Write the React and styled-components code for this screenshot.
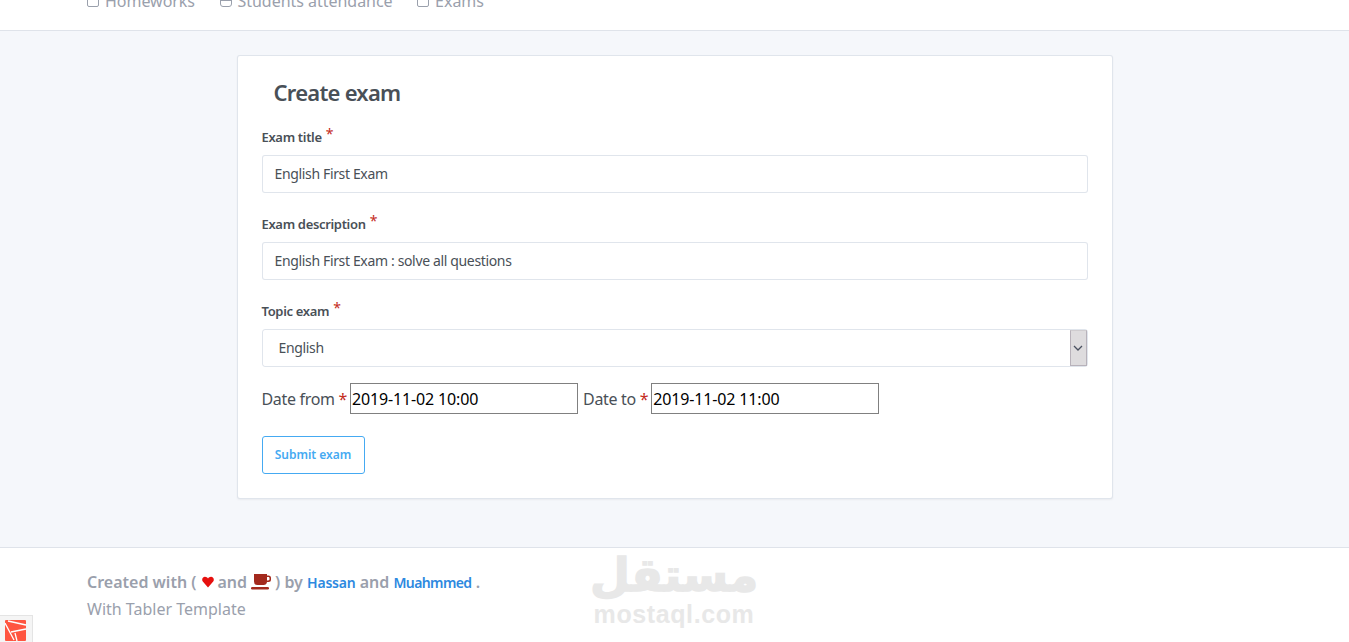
import React from "react";
import styled, { createGlobalStyle } from "styled-components";

const Global = createGlobalStyle`
  html, body { margin: 0; padding: 0; height: 642px; overflow: hidden; background: #f5f7fb; }
  body { font-family: "Noto Sans", "Liberation Sans", sans-serif; color: #495057; font-size: 15px; }
  * { box-sizing: border-box; }
`;
const Page = styled.div`display:flex;flex-direction:column;height:642px;position:relative;overflow:hidden;`;
const Header = styled.header`height:31px;background:#fff;border-bottom:1px solid #dfe3ea;padding-left:87px;display:flex;align-items:flex-end;gap:24.500px;overflow:hidden;flex:none;`;
const NavItem = styled.div`display:flex;align-items:center;gap:6px;height:20px;margin-bottom:19px;font-size:16px;letter-spacing:-.03px;color:#9aa0ac;white-space:nowrap;svg{flex:none;}`;
const Main = styled.main`flex:none;height:516px;padding-top:24px;display:flex;justify-content:center;`;
const Card = styled.section`width:876px;height:444px;background:#fff;border:1px solid rgba(0,40,100,.12);border-radius:3px;box-shadow:0 1px 2px rgba(0,0,0,.05);padding:0 24px;`;
const Title = styled.h1`margin:0;padding:21px 0 0 12px;height:69px;font-size:22px;line-height:30px;font-weight:600;letter-spacing:-.75px;color:#495057;`;
const Field = styled.div`margin-bottom:24px;height:63px;`;
const Label = styled.label`display:block;height:30px;font-size:13px;line-height:23px;font-weight:600;letter-spacing:-.33px;color:#495057;`;
const Star = styled.span`color:#c42c1c;`;
const LabelStar = styled(Star)`font-size:14px;font-weight:400;position:relative;top:-3px;margin-left:1px;`;
const TextInput = styled.input`display:block;width:100%;height:38px;border:1px solid rgba(0,40,100,.12);border-radius:3px;padding:0 12px 2px;font:14px "Noto Sans",sans-serif;letter-spacing:-.35px;color:#495057;outline:none;background:#fff;`;
const SelectBox = styled.div`display:flex;align-items:center;height:38px;border:1px solid rgba(0,40,100,.12);border-radius:3px;padding:0 0 0 16px;font-size:14px;letter-spacing:-.35px;color:#495057;justify-content:space-between;`;
const SelectText = styled.span`margin-top:-2px;`;
const Arrow = styled.div`width:17px;height:36px;background:#dedcde;border:1px solid #b8b2ba;border-top-color:#cfcccf;display:flex;align-items:center;justify-content:center;`;
const DateRow = styled.div`display:flex;align-items:center;height:31px;margin-top:-3px;font-size:16px;letter-spacing:-.32px;color:#495057;white-space:nowrap;`;
const DateLabel = styled.span`margin-right:${p=>p.$gap}px;`;
const DateInput = styled.input`width:228px;height:31px;border:1px solid #808080;padding:0 1px;margin-right:5px;font:16px "Noto Sans",sans-serif;letter-spacing:-.15px;color:#000;outline:none;background:#fff;`;
const Submit = styled.button`display:block;margin-top:22px;width:103px;height:38px;background:#fff;border:1px solid #45aaf2;border-radius:3px;color:#45aaf2;font:600 12px "Noto Sans",sans-serif;padding:0 0 1px;`;
const Footer = styled.footer`flex:1;background:#fff;border-top:1px solid #dfe3ea;padding:18px 0 0 87px;color:#9aa0ac;font-size:16px;position:relative;`;
const Credit = styled.div`display:flex;align-items:center;height:32px;font-weight:600;white-space:pre;`;
const IconSlot = styled.span`display:flex;margin:0 ${p=>p.$r}px 0 ${p=>p.$l}px;`;
const Author = styled.a`color:#2d89e0;font-size:14px;letter-spacing:${p=>p.$ls}px;`;
const Sub = styled.div`height:24px;line-height:22px;`;
const Mark = styled.div`position:absolute;left:592px;top:1px;width:164px;display:flex;flex-direction:column;align-items:center;color:#e8e8e8;`;
const MarkAr = styled.div`font:bold 46px/52px "DejaVu Sans",sans-serif;-webkit-text-stroke:1.500px #e8e8e8;`;
const MarkEn = styled.div`font:bold 25px/26px "Liberation Sans",sans-serif;letter-spacing:.6px;`;
const Debug = styled.div`position:absolute;left:0;bottom:0;width:33px;height:27px;background:#f5f5f5;border:1px solid #e4e4e4;border-left:0;border-bottom:0;padding:4px 0 0 5px;`;

const Square=()=> <svg width="12" height="12" viewBox="0 0 12 12" fill="none" stroke="#9aa0ac"><rect x=".5" y=".5" width="11" height="11" rx="1.5"/></svg>;
const Db=()=> <svg width="12" height="12" viewBox="0 0 12 12" fill="none" stroke="#9aa0ac"><rect x=".5" y=".5" width="11" height="11" rx="2.5"/><path d="M.5 5.500h11"/></svg>;
const Heart=()=> <svg width="12" height="12" viewBox="0 0 12 12"><path fill="#e6100e" d="M6 11.500.8 5.600C-.6 3.600.5.800 3 .8c1.300 0 2.400.7 3 1.800C6.600 1.500 7.700.8 9 .8c2.500 0 3.600 2.800 2.200 4.800Z"/></svg>;
const Mug=()=> <svg width="20" height="16" viewBox="0 0 20 16"><path fill="#a3291d" d="M3 0h13v1.500h1.500A2.500 2.500 0 0 1 20 4v1.500A2.500 2.500 0 0 1 17.500 8H16a3.500 3.500 0 0 1-3.500 3h-6A3.500 3.500 0 0 1 3 7.500ZM16 3v3.500h1.200c.7 0 1.300-.5 1.300-1.200V4.200c0-.7-.6-1.200-1.300-1.200Z"/><rect x="0" y="13" width="18" height="2.500" rx="1.200" fill="#a3291d"/></svg>;
const Laravel=()=> <svg width="22" height="22" viewBox="0 0 22 22"><rect width="21" height="21" rx="1" fill="#ff5540"/><path d="M0 3 9 20M3 1 21 5M6 12 21 9M12 21l-2-8" fill="none" stroke="#fff" strokeWidth="1.300"/></svg>;
const Chevron=()=> <svg width="10" height="6" viewBox="0 0 10 6" fill="none" stroke="#4a5160" strokeWidth="1.300"><path d="m1 1 4 4 4-4"/></svg>;

export default function App(){
  return <Page>
    <Global/>
    <Header>
      <NavItem><Square/>Homeworks</NavItem>
      <NavItem><Db/>Students attendance</NavItem>
      <NavItem><Square/>Exams</NavItem>
    </Header>
    <Main><Card>
      <Title>Create exam</Title>
      <Field><Label>Exam title <LabelStar>*</LabelStar></Label><TextInput readOnly value="English First Exam"/></Field>
      <Field><Label>Exam description <LabelStar>*</LabelStar></Label><TextInput readOnly value="English First Exam : solve all questions"/></Field>
      <Field><Label>Topic exam <LabelStar>*</LabelStar></Label><SelectBox><SelectText>English</SelectText><Arrow><Chevron/></Arrow></SelectBox></Field>
      <DateRow>
        <DateLabel $gap={3}>Date from <Star>*</Star></DateLabel><DateInput readOnly value="2019-11-02 10:00"/>
        <DateLabel $gap={3}>Date to <Star>*</Star></DateLabel><DateInput readOnly value="2019-11-02 11:00"/>
      </DateRow>
      <Submit>Submit exam</Submit>
    </Card></Main>
    <Footer>
      <Credit>Created with (<IconSlot $l={6} $r={3}><Heart/></IconSlot>and<IconSlot $l={4} $r={4}><Mug/></IconSlot>) by <Author $ls={-.2}>Hassan</Author> and <Author $ls={-.6}>Muahmmed</Author> .</Credit>
      <Sub>With Tabler Template</Sub>
      <Mark><MarkAr>مستقل</MarkAr><MarkEn>mostaql.com</MarkEn></Mark>
    </Footer>
    <Debug><Laravel/></Debug>
  </Page>;
}
